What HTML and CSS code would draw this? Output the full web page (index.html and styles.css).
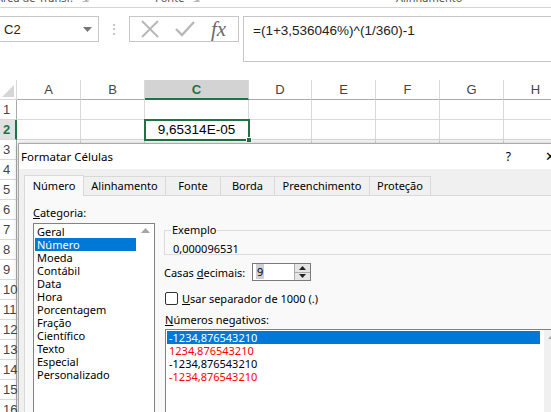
FILE: index.html
```html
<!DOCTYPE html>
<html lang="pt">
<head>
  <meta charset="UTF-8" />
  <title>Formatar Células</title>
  <link rel="stylesheet" href="styles.css">
</head>
<body>
  <div class="ribbon">
    <span class="grp g1">Área de Transf. <i>⇲</i></span>
    <span class="grp g2">Fonte <i>⇲</i></span>
    <span class="grp g3">Alinhamento</span>
  </div>

  <div class="formula-row">
    <div class="name-box">
      <span>C2</span>
      <svg class="caret" width="9" height="5" viewBox="0 0 9 5"><path d="M0 0h9L4.5 5z" fill="#777"/></svg>
    </div>
    <div class="grip">⋮</div>
    <div class="fx-buttons">
      <svg width="20" height="20" viewBox="0 0 20 20"><path d="M2 2L18 18M18 2L2 18" stroke="#b8b8b8" stroke-width="2"/></svg>
      <svg width="20" height="20" viewBox="0 0 20 20"><path d="M1 10L7 16L19 3" stroke="#b8b8b8" stroke-width="2.4" fill="none"/></svg>
      <span class="fx">fx</span>
    </div>
    <div class="formula">=(1+3,536046%)^(1/360)-1</div>
  </div>

  <div class="sheet">
    <div class="corner"><svg width="12" height="12" viewBox="0 0 12 12"><path d="M12 0V12H0z" fill="#d6d6d6"/></svg></div>
    <div class="col">A</div>
    <div class="col">B</div>
    <div class="col active">C</div>
    <div class="col">D</div>
    <div class="col">E</div>
    <div class="col">F</div>
    <div class="col">G</div>
    <div class="col">H</div>

    <div class="row">1</div>
    <div class="cell"></div><div class="cell"></div><div class="cell"></div><div class="cell"></div><div class="cell"></div><div class="cell"></div><div class="cell"></div><div class="cell"></div>

    <div class="row active">2</div>
    <div class="cell"></div><div class="cell"></div><div class="cell selected">9,65314E-05<b class="handle"></b></div><div class="cell"></div><div class="cell"></div><div class="cell"></div><div class="cell"></div><div class="cell"></div>

    <div class="row">3</div>
    <div class="cell"></div><div class="cell"></div><div class="cell"></div><div class="cell"></div><div class="cell"></div><div class="cell"></div><div class="cell"></div><div class="cell"></div>
    <div class="row">4</div><div class="cell wide"></div>
    <div class="row">5</div><div class="cell wide"></div>
    <div class="row">6</div><div class="cell wide"></div>
    <div class="row">7</div><div class="cell wide"></div>
    <div class="row">8</div><div class="cell wide"></div>
    <div class="row">9</div><div class="cell wide"></div>
    <div class="row">10</div><div class="cell wide"></div>
    <div class="row">11</div><div class="cell wide"></div>
    <div class="row">12</div><div class="cell wide"></div>
    <div class="row">13</div><div class="cell wide"></div>
    <div class="row">14</div><div class="cell wide"></div>
    <div class="row">15</div><div class="cell wide"></div>
    <div class="row">16</div><div class="cell wide"></div>
  </div>

  <div class="dialog">
    <div class="title-bar">
      <span class="title">Formatar Células</span>
      <span class="help">?</span>
      <span class="close">✕</span>
    </div>
    <div class="dialog-body">
      <div class="tabs">
        <div class="tab current t-num">Número</div>
        <div class="tab t-ali">Alinhamento</div>
        <div class="tab t-fon">Fonte</div>
        <div class="tab t-bor">Borda</div>
        <div class="tab t-pre">Preenchimento</div>
        <div class="tab t-pro">Proteção</div>
      </div>
      <div class="panel">
        <div class="left">
          <div class="label"><u>C</u>ategoria:</div>
          <div class="listbox">
            <ul class="items">
              <li>Geral</li>
              <li class="sel">Número</li>
              <li>Moeda</li>
              <li>Contábil</li>
              <li>Data</li>
              <li>Hora</li>
              <li>Porcentagem</li>
              <li>Fração</li>
              <li>Científico</li>
              <li>Texto</li>
              <li>Especial</li>
              <li>Personalizado</li>
            </ul>
            <div class="vscroll"><svg width="9" height="5" viewBox="0 0 9 5"><path d="M0 5L4.5 0L9 5z" fill="#a6a6a6"/></svg></div>
          </div>
        </div>
        <div class="right">
          <fieldset class="sample">
            <legend>Exemplo</legend>
            <div class="sample-value">0,000096531</div>
          </fieldset>
          <div class="decimals">
            <span class="dec-label">Casas <u>d</u>ecimais:</span>
            <div class="spin">
              <div class="spin-text"><span class="hl">9</span></div>
              <div class="spin-btns">
                <div class="sb"><svg width="7" height="4" viewBox="0 0 7 4"><path d="M0 4L3.5 0L7 4z" fill="#222"/></svg></div>
                <div class="sb"><svg width="7" height="4" viewBox="0 0 7 4"><path d="M0 0h7L3.5 4z" fill="#222"/></svg></div>
              </div>
            </div>
          </div>
          <div class="check-row">
            <span class="check"></span>
            <span><u>U</u>sar separador de 1000 (.)</span>
          </div>
          <div class="label"><u>N</u>úmeros negativos:</div>
          <div class="neg-box">
            <ul class="neg">
              <li class="sel">-1234,876543210</li>
              <li class="red">1234,876543210</li>
              <li>-1234,876543210</li>
              <li class="red">-1234,876543210</li>
            </ul>
            <div class="vscroll"><svg width="9" height="5" viewBox="0 0 9 5"><path d="M0 5L4.5 0L9 5z" fill="#a6a6a6"/></svg></div>
          </div>
        </div>
      </div>
    </div>
  </div>
</body>
</html>
```

FILE: styles.css
```css
* {
  box-sizing: border-box;
}

body {
  margin: 0;
  width: 551px;
  height: 412px;
  overflow: hidden;
  position: relative;
  background: #fff;
  font-family: "Noto Sans", "Open Sans", sans-serif;
  color: #000;
}

/* ribbon strip, only the bottom edge shows */
.ribbon {
  height: 8px;
  border-bottom: 1px solid #d4d4d4;
  overflow: hidden;
  position: relative;
  font-size: 11px;
  color: #555;
  white-space: nowrap;
}

.grp {
  position: absolute;
  top: -10px;
}

.grp i {
  font-style: normal;
  font-size: 8px;
  color: #888;
  margin-left: 6px;
}

.g1 { left: -4px; }
.g2 { left: 155px; }
.g3 { left: 396px; }

.formula-row {
  display: flex;
  align-items: flex-start;
  margin-top: 8px;
  height: 64px;
  font-family: "Liberation Sans", sans-serif;
}

.name-box {
  width: 99px;
  height: 26px;
  border: 1px solid #c6c6c6;
  border-left: none;
  display: flex;
  align-items: center;
  justify-content: space-between;
  padding: 0 6px 0 4px;
  font-size: 13px;
  color: #222;
}

.grip {
  width: 30px;
  text-align: center;
  color: #b5b5b5;
  font-size: 14px;
  line-height: 26px;
}

.fx-buttons {
  width: 110px;
  height: 26px;
  border: 1px solid #c6c6c6;
  display: flex;
  align-items: center;
  justify-content: space-around;
  padding: 0 4px 0 2px;
}

.fx {
  font-family: "Liberation Serif", serif;
  font-style: italic;
  font-size: 21px;
  color: #6a6a6a;
  line-height: 1;
}

.formula {
  margin-left: 4px;
  flex: 1;
  height: 46px;
  border: 1px solid #c6c6c6;
  border-right: none;
  padding: 6px 9px;
  font-size: 13.5px;
  color: #222;
}

/* sheet */
.sheet {
  display: grid;
  grid-template-columns: 17px 64px 64px 104px 63px 64px 64px 64px 64px;
  grid-auto-rows: 20px;
  font-family: "Liberation Sans", sans-serif;
  font-size: 13px;
}

.sheet > div {
  border-right: 1px solid #d9d9d9;
  border-bottom: 1px solid #d9d9d9;
}

.corner {
  display: flex;
  align-items: flex-end;
  justify-content: flex-end;
  padding: 2px;
  height: 20px;
}

.col {
  text-align: center;
  line-height: 19px;
  color: #444;
  border-bottom-color: #ababab !important;
}

.col.active {
  background: #d3d3d3;
  color: #217346;
  font-weight: bold;
  border-bottom: 2px solid #217346 !important;
}

.row {
  grid-column: 1;
  padding-left: 3px;
  line-height: 19px;
  color: #444;
  border-right-color: #ababab !important;
}

.row.active {
  background: #e1e1e1;
  color: #217346;
  font-weight: bold;
  border-right: 2px solid #217346 !important;
}

.cell.wide {
  grid-column: 2 / span 8;
}

.cell.selected {
  position: relative;
  outline: 2px solid #217346;
  outline-offset: -1px;
  text-align: center;
  line-height: 19px;
  font-size: 13.5px;
  z-index: 1;
}

.handle {
  position: absolute;
  right: -4px;
  bottom: -4px;
  width: 6px;
  height: 6px;
  background: #217346;
  border: 1px solid #fff;
}

/* dialog */
.dialog {
  position: absolute;
  left: 18px;
  top: 143px;
  width: 545px;
  height: 290px;
  background: #f0f0f0;
  border: 1px solid #aaa;
  box-shadow: 0 0 6px rgba(0, 0, 0, 0.25);
  font-size: 11px;
  z-index: 5;
}

.title-bar {
  height: 25px;
  background: #fff;
  display: flex;
  align-items: center;
  padding: 0 9px 0 2px;
  font-size: 11.5px;
}

.title {
  flex: 1;
}

.help {
  margin-right: 34px;
  font-size: 12px;
}

.close {
  font-size: 13px;
  width: 8px;
  overflow: hidden;
  font-family: "DejaVu Sans", sans-serif;
  font-weight: 300;
}

.dialog-body {
  padding: 5px 0 0 5px;
}

.tabs {
  display: flex;
  align-items: flex-end;
  height: 21px;
}

.tab {
  height: 19px;
  text-align: center;
  border: 1px solid #d9d9d9;
  border-bottom: none;
  border-left: none;
  background: #f0f0f0;
  line-height: 18px;
}

.tab.current {
  height: 21px;
  background: #f9f9f9;
  border-left: 1px solid #d9d9d9;
  line-height: 20px;
  position: relative;
  top: 1px;
}

.t-num { width: 60px; }
.t-ali { width: 82px; }
.t-fon { width: 55px; }
.t-bor { width: 54px; }
.t-pre { width: 95px; }
.t-pro { width: 61px; }

.panel {
  display: flex;
  background: #f9f9f9;
  border: 1px solid #d9d9d9;
  height: 240px;
  padding: 10px 0 0 8px;
}

.label {
  line-height: 14px;
  margin-bottom: 3px;
}

.left {
  width: 131px;
}

.listbox {
  display: flex;
  width: 122px;
  height: 200px;
  border: 1px solid #828282;
  background: #fff;
}

.items,
.neg {
  list-style: none;
  margin: 0;
  padding: 1px 1px 0;
  flex: 1;
}

.items li,
.neg li {
  height: 13px;
  line-height: 13px;
  padding-left: 2px;
  white-space: nowrap;
}

.sel {
  background: #0078d7;
  color: #fff;
}

.red {
  color: #ff0000;
}

.vscroll {
  width: 17px;
  background: #f0f0f0;
  display: flex;
  justify-content: center;
  padding-top: 4px;
}

.listbox .vscroll {
  background: #fff;
}

.right {
  flex: 1;
  padding-top: 18px;
}

.sample {
  margin: 0;
  padding: 0 0 0 8px;
  height: 31px;
  border: 1px solid #dcdcdc;
  position: relative;
}

.sample legend {
  padding: 0 1px;
  margin-left: -2px;
  line-height: 12px;
}

.sample-value {
  position: relative;
  top: 5px;
}

.decimals {
  display: flex;
  align-items: center;
  margin-top: 8px;
  height: 18px;
  white-space: nowrap;
}

.dec-label {
  width: 88px;
}

.spin {
  display: flex;
  width: 59px;
  height: 18px;
  border: 1px solid #7a7a7a;
  background: #fff;
}

.spin-text {
  flex: 1;
  padding: 1px 0 0 3px;
  line-height: 14px;
}

.hl {
  background: #cfcfcf;
  padding: 0 1px;
}

.spin-btns {
  width: 16px;
  display: flex;
  flex-direction: column;
  border-left: 1px solid #ababab;
}

.sb {
  flex: 1;
  background: #e5e5e5;
  display: flex;
  align-items: center;
  justify-content: center;
  border-bottom: 1px solid #ababab;
}

.sb:last-child {
  border-bottom: none;
}

.check-row {
  display: flex;
  align-items: center;
  gap: 4px;
  margin-top: 10px;
  height: 14px;
  margin-left: 1px;
}

.check {
  width: 13px;
  height: 13px;
  border: 1px solid #333;
  border-radius: 2px;
  background: #fff;
}

.right .label {
  margin-top: 8px;
  margin-left: 1px;
}

.neg-box {
  display: flex;
  height: 90px;
  margin-left: 1px;
  margin-top: -1px;
  border: 1px solid #828282;
  border-right: none;
  background: #fff;
}

.neg li {
  width: 373px;
}
```
